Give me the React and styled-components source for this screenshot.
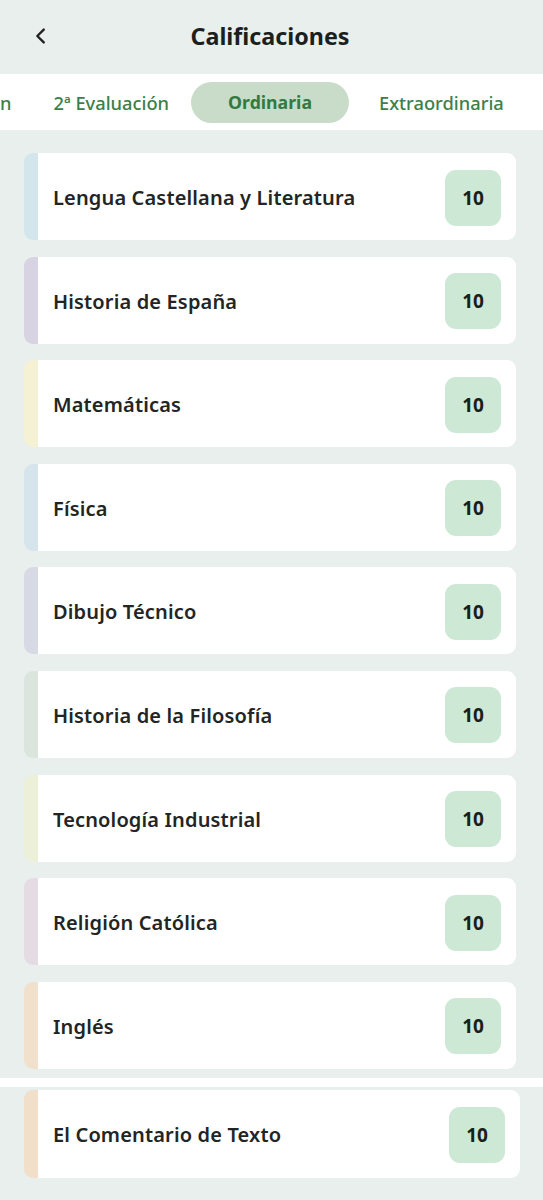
import React, { useEffect, useRef } from "react";
import styled, { createGlobalStyle } from "styled-components";

const tabs = ["1ª Evaluación", "2ª Evaluación", "Ordinaria", "Extraordinaria"];
const activeTab = "Ordinaria";

//subjects with the colour of their side stripe
const subjects = [
  { name: "Lengua Castellana y Literatura", grade: 10, color: "#d3e6ec" },
  { name: "Historia de España", grade: 10, color: "#d8d3e2" },
  { name: "Matemáticas", grade: 10, color: "#f5f1d5" },
  { name: "Física", grade: 10, color: "#d6e5ec" },
  { name: "Dibujo Técnico", grade: 10, color: "#d7d9e5" },
  { name: "Historia de la Filosofía", grade: 10, color: "#dbe5dd" },
  { name: "Tecnología Industrial", grade: 10, color: "#edf0d9" },
  { name: "Religión Católica", grade: 10, color: "#e5dbe2" },
  { name: "Inglés", grade: 10, color: "#f1e0cb" },
];

const extra = { name: "El Comentario de Texto", grade: 10, color: "#f1dfca" };

const App = () => {
  const stripRef = useRef(null);
  const activeRef = useRef(null);

  //scroll the tab strip so the selected tab sits where it does in the app
  useEffect(() => {
    if (stripRef.current && activeRef.current) {
      stripRef.current.scrollLeft = activeRef.current.offsetLeft - 191;
    }
  }, []);

  return (
    <>
      <GlobalStyle />
      <Page>
        <Header>
          <BackButton aria-label="Volver">
            <svg width="22" height="22" viewBox="0 0 24 24" fill="none" stroke="#222" strokeWidth="2.6" strokeLinecap="round" strokeLinejoin="round">
              <path d="M15 5l-7 7 7 7" />
            </svg>
          </BackButton>
          <Title>Calificaciones</Title>
        </Header>

        <TabStrip ref={stripRef}>
          <TabTrack>
            {tabs.map((tab) => (
              <Tab key={tab} ref={tab === activeTab ? activeRef : null} $active={tab === activeTab}>
                {tab}
              </Tab>
            ))}
          </TabTrack>
        </TabStrip>

        <List>
          {subjects.map((s) => (
            <Card key={s.name} $stripe={s.color}>
              <Subject>{s.name}</Subject>
              <Grade>{s.grade}</Grade>
            </Card>
          ))}
        </List>

        <Divider />

        <ExtraList>
          <Card $stripe={extra.color} $tall>
            <Subject>{extra.name}</Subject>
            <Grade>{extra.grade}</Grade>
          </Card>
        </ExtraList>
      </Page>
    </>
  );
};

export default App;

const GlobalStyle = createGlobalStyle`
  html, body {
    margin: 0;
    padding: 0;
    background: #e8efec;
  }
  * {
    box-sizing: border-box;
  }
`;

const Page = styled.div`
  width: 543px;
  height: 1200px;
  overflow: hidden;
  background: #e8efec;
  font-family: "Noto Sans", "Open Sans", sans-serif;
  color: #1f2221;
`;

const Header = styled.header`
  height: 74px;
  display: flex;
  align-items: center;
  justify-content: center;
  position: relative;
`;

const BackButton = styled.button`
  position: absolute;
  left: 29px;
  top: 24px;
  width: 24px;
  height: 24px;
  padding: 0;
  border: none;
  background: none;
  display: flex;
  align-items: center;
  justify-content: center;
`;

const Title = styled.h1`
  margin: 0 3px 2px 0;
  font-size: 23.3px;
  font-weight: 700;
  color: #1c1f1e;
`;

const TabStrip = styled.nav`
  height: 56px;
  background: #ffffff;
  overflow: hidden;
  display: flex;
  align-items: center;
`;

const TabTrack = styled.div`
  display: flex;
  align-items: center;
  gap: 2px;
  padding: 0 200px;
`;

const Tab = styled.div`
  flex: none;
  height: 41px;
  display: flex;
  align-items: center;
  justify-content: center;
  padding: 0 ${(p) => (p.$active ? "37px" : "20px")};
  margin-right: ${(p) => (p.$active ? "8px" : "0")};
  border-radius: 21px;
  background: ${(p) => (p.$active ? "#c9dcca" : "transparent")};
  color: ${(p) => (p.$active ? "#327a42" : "#3c8049")};
  font-size: ${(p) => (p.$active ? "17.7px" : "18.3px")};
  font-weight: ${(p) => (p.$active ? 700 : 500)};
  white-space: nowrap;
`;

const List = styled.div`
  display: flex;
  flex-direction: column;
  gap: 16.6px;
  padding: 23px 27px 0 24px;
`;

const Card = styled.div`
  height: ${(p) => (p.$tall ? "88px" : "87px")};
  display: flex;
  align-items: center;
  justify-content: space-between;
  padding: 2px 15px 0 15px;
  background: #ffffff;
  border-radius: 9px;
  border-left: 14px solid ${(p) => p.$stripe};
`;

const Subject = styled.span`
  font-size: 20px;
  font-weight: 600;
  letter-spacing: 0.15px;
  color: #222524;
`;

const Grade = styled.span`
  width: 56px;
  height: 56px;
  border-radius: 11px;
  background: #cde8d5;
  display: flex;
  align-items: center;
  justify-content: center;
  font-size: 19px;
  font-weight: 700;
  color: #17201a;
`;

const Divider = styled.div`
  height: 9px;
  margin-top: 9px;
  background: #ffffff;
`;

const ExtraList = styled.div`
  padding: 3px 23px 0 24px;
`;
